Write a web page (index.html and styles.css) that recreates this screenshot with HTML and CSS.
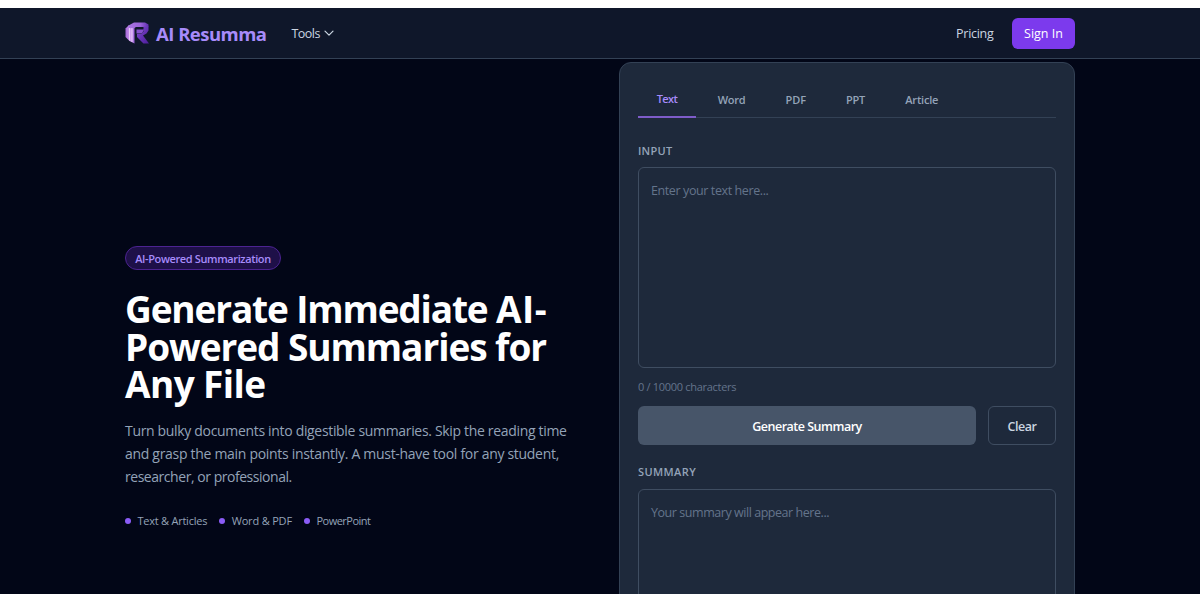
FILE: index.html
```html
<!DOCTYPE html>
<html lang="en">
<head>
<meta charset="utf-8">
<title>AI Resumma</title>
<link rel="stylesheet" href="styles.css">
</head>
<body>
<div class="page">
  <header class="header">
    <div class="container nav">
      <a class="brand">
        <svg class="logo" viewBox="0 0 24 22" width="24" height="22" aria-hidden="true">
          <defs>
            <linearGradient id="left" x1="0" y1="0" x2="1" y2="0"><stop offset="0" stop-color="#a566d8"/><stop offset=".6" stop-color="#d3a2f2"/><stop offset="1" stop-color="#9a5fd8"/></linearGradient>
            <linearGradient id="top" x1="0" y1="0" x2="1" y2="0"><stop offset="0" stop-color="#a873e0"/><stop offset=".6" stop-color="#9a63d8"/><stop offset="1" stop-color="#5f2fb0"/></linearGradient>
            <linearGradient id="leg" x1="0" y1="0" x2="1" y2="1"><stop offset="0" stop-color="#8048cf"/><stop offset="1" stop-color="#4c1d9a"/></linearGradient>
          </defs>
          <path d="M.5 6.500 4 3 9.500 4V21.500L4.500 19 .5 15Z" fill="url(#left)"/>
          <path d="M3.500 3.500 9 .5H20L23.500 2.500V5H11L8.500 6.500 3.500 6Z" fill="url(#top)"/>
          <path d="M4.500 6V18.500M7 6V20" stroke="#ecd0fb" stroke-width=".9"/>
          <path d="M18.500 4.500H23.500V8.500L21.500 11.500 18 13.500 24 21.500H18.500L12 15V12H16.500L18.500 9.500Z" fill="url(#leg)"/>
          <path d="M11.500 7.500H19L17 11.500H11.500Z" fill="#8650cf"/>
        </svg>
        <span class="brand-name">AI Resumma</span>
      </a>
      <a class="tools"><span class="tools-label">Tools</span>
        <svg width="10" height="7" viewBox="0 0 10 7" aria-hidden="true"><path d="M1 1.200 5 5.200 9 1.200" fill="none" stroke="#cbd5e1" stroke-width="1.200" stroke-linecap="round" stroke-linejoin="round"/></svg>
      </a>
      <a class="pricing">Pricing</a>
      <a class="signin"><span>Sign In</span></a>
    </div>
  </header>
  <main class="container hero">
    <section class="intro">
      <span class="badge"><span>AI-Powered Summarization</span></span>
      <h1 class="title"><span class="t1">Generate Immediate <span class="t1-end">AI-</span></span><br><span class="t2">Powered Summaries for</span><br><span class="t3">Any File</span></h1>
      <p class="lead"><span class="l1">Turn bulky documents into digestible summaries. Skip the reading time</span><br><span class="l2">and grasp the main points instantly. A must-have tool for any student,</span><br><span class="l3">researcher, or professional.</span></p>
      <ul class="formats">
        <li class="f1">Text &amp; Articles</li>
        <li class="f2">Word &amp; PDF</li>
        <li class="f3">PowerPoint</li>
      </ul>
    </section>
    <section class="card">
      <nav class="tabs">
        <a class="tab tab-text active">Text</a>
        <a class="tab tab-word">Word</a>
        <a class="tab tab-pdf">PDF</a>
        <a class="tab tab-ppt">PPT</a>
        <a class="tab tab-article">Article</a>
      </nav>
      <div class="label label-input">INPUT</div>
      <div class="box input"><span>Enter your text here...</span></div>
      <div class="count"><span>0 / 10000 characters</span></div>
      <div class="actions">
        <a class="btn generate"><span>Generate Summary</span></a>
        <a class="btn clear"><span>Clear</span></a>
      </div>
      <div class="label label-summary">SUMMARY</div>
      <div class="box output"><span>Your summary will appear here...</span></div>
    </section>
  </main>
</div>
</body>
</html>
```
FILE: styles.css
```css
* { box-sizing: border-box; }
body { margin: 0; padding: 8px 0; height: 602px; overflow: hidden; background: #fff; font-family: "Open Sans", "Noto Sans", sans-serif; }
.page { height: 586px; overflow: hidden; background: #020617; }
.container { width: 950px; margin: 0 auto; }
.header { height: 51px; background: #0f172a; border-bottom: 1px solid #334155; }
.nav { display: flex; align-items: center; height: 50px; font-size: 12.5px; color: #cbd5e1; white-space: nowrap; }
.brand { display: flex; align-items: center; gap: 7px; width: 166.500px; }
.logo { flex: none; }
.brand-name { font-size: 18.5px; font-weight: 700; letter-spacing: -0.52px; color: #a78bfa; }
.tools { display: flex; align-items: center; gap: 4px; }
.tools-label { letter-spacing: -0.55px; }
.pricing { margin-left: auto; margin-right: 18.500px; letter-spacing: -0.28px; }
.signin { display: flex; align-items: center; justify-content: center; width: 63px; height: 31px; border-radius: 6px; background: #7c3aed; color: #fff; }
.hero { display: grid; grid-template-columns: 456px 456px; column-gap: 38px; padding-top: 3px; }
.intro { padding-top: 184px; white-space: nowrap; }
.badge { display: flex; align-items: center; justify-content: center; width: 156px; height: 24px; border: 1px solid #4c2391; border-radius: 12px; background: #1e1048; color: #a78bfa; font-size: 11px; font-weight: 600; letter-spacing: -0.38px; }
.title { margin: 20px 0 0; font-size: 37px; line-height: 37.5px; font-weight: 700; color: #fff; }
.t1 { letter-spacing: -1.15px; }
.t1-end { letter-spacing: 0.5px; }
.t2 { letter-spacing: -1.05px; }
.t3 { letter-spacing: -0.6px; }
.lead { margin: 17.500px 0 0; font-size: 14px; line-height: 22.8px; color: #94a3b8; }
.l1 { letter-spacing: -0.325px; }
.l2 { letter-spacing: -0.3px; }
.l3 { letter-spacing: -0.46px; }
.formats { display: flex; gap: 12px; margin: 23.500px 0 0; padding: 0; list-style: none; font-size: 11px; line-height: 18px; color: #94a3b8; }
.formats li { display: flex; align-items: center; gap: 6.500px; }
.formats li::before { content: ""; width: 6px; height: 6px; border-radius: 50%; background: #8b5cf6; }
.f1 { letter-spacing: -0.24px; }
.f2 { letter-spacing: -0.18px; }
.f3 { letter-spacing: -0.5px; }
.card { height: 620px; padding: 19px 18px; border: 1px solid #334155; border-radius: 12px; background: #1e293b; white-space: nowrap; }
.tabs { display: flex; gap: 3px; height: 36px; border-bottom: 1px solid #334155; }
.tab { height: 36px; line-height: 36px; text-align: center; font-size: 11px; font-weight: 600; color: #94a3b8; }
.active { height: 36px; line-height: 34px; border-bottom: 2px solid #7e5cc9; color: #a78bfa; }
.tab-text { width: 58px; letter-spacing: -0.6px; }
.tab-word { width: 65px; letter-spacing: -0.3px; }
.tab-pdf { width: 57.500px; }
.tab-ppt { width: 56px; letter-spacing: -0.2px; }
.tab-article { width: 70.500px; letter-spacing: -0.2px; }
.label { font-size: 11px; line-height: 16px; font-weight: 600; color: #94a3b8; }
.label-input { margin-top: 25px; letter-spacing: 0.25px; }
.label-summary { margin-top: 19px; letter-spacing: 0.4px; }
.box { margin-top: 8px; padding: 12px; border: 1px solid #3f4d61; border-radius: 6px; font-size: 12.5px; line-height: 22px; color: #64748b; }
.input { height: 201px; letter-spacing: -0.4px; }
.output { height: 201px; margin-top: 9px; letter-spacing: -0.45px; }
.count { margin-top: 11px; font-size: 11px; line-height: 16px; letter-spacing: -0.3px; color: #64748b; }
.actions { display: flex; gap: 12px; margin-top: 11px; }
.btn { display: flex; align-items: center; justify-content: center; height: 39px; padding-top: 1px; border-radius: 6px; font-size: 12.5px; font-weight: 600; }
.generate { width: 338px; background: #475569; color: #fff; letter-spacing: -0.5px; }
.clear { width: 68px; border: 1px solid #3f4d61; color: #cbd5e1; letter-spacing: -0.5px; }
```
